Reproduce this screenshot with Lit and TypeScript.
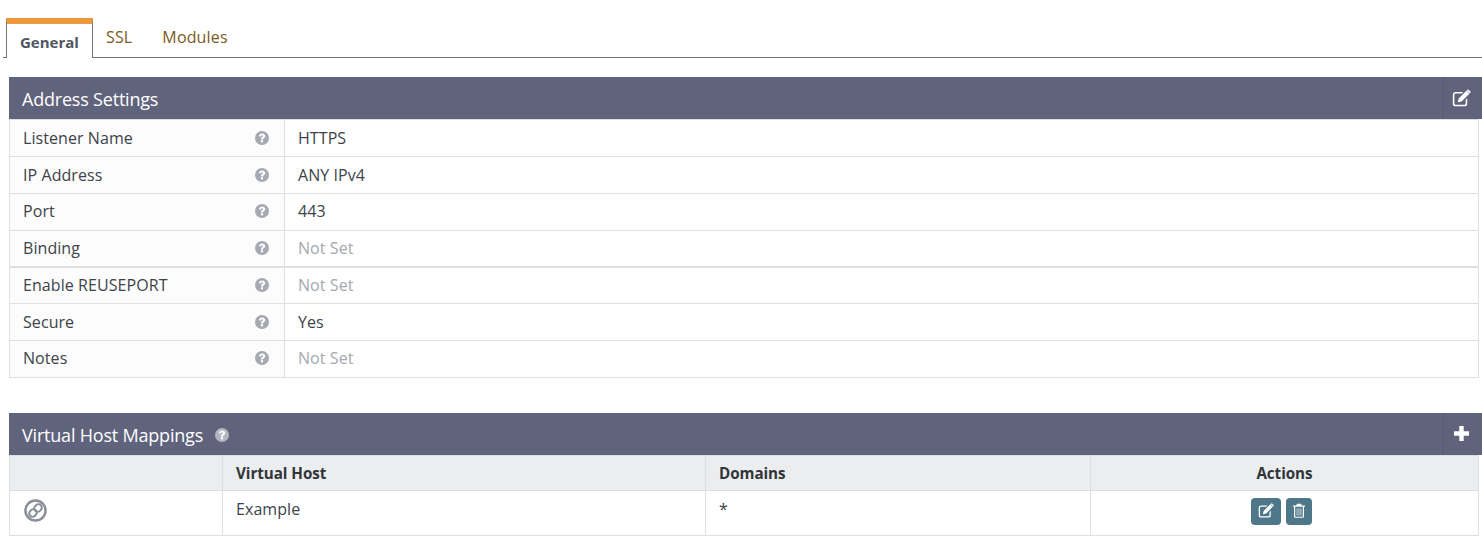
import { LitElement, html, css, svg } from "lit";
import { customElement } from "lit/decorators.js";

const help = html`<svg class="help" viewBox="0 0 14 14" aria-hidden="true"><circle cx="7" cy="7" r="7" fill="currentColor"></circle><path d="M3.900 5.300C4.100 3.500 5.400 2.400 7.100 2.400c1.800 0 3.200 1.200 3.200 2.700 0 1.100-.7 1.700-1.500 2.200-.5.300-.7.500-.7 1.100H5.900c0-1.100.3-1.700 1.100-2.200.6-.4 1-.6 1-1.100 0-.5-.4-.8-1-.8-.6 0-1 .4-1.200 1.200z" fill="#fff"></path><rect x="5.900" y="9.200" width="2.200" height="2.200" fill="#fff"></rect></svg>`;

const edit = svg`<path d="M2.800 2.500H9.500L8.200 3.800H3a1 1 0 0 0-1 1v7.400a1 1 0 0 0 1 1h7.500a1 1 0 0 0 1-1V9l1.300-1.300v4.700a2.200 2.200 0 0 1-2.200 2.200H2.900A2.200 2.200 0 0 1 .7 12.400V4.700a2.200 2.200 0 0 1 2.100-2.200z" fill="currentColor"></path><path d="M12.300 1.300l2.500 2.500-6.700 6.700-3.200.7.700-3.200zM13 .6c.3-.3.7-.3 1 0l1.500 1.500c.3.3.3.7 0 1l-.4.400-2.500-2.500z" fill="currentColor"></path>`;

const trash = svg`<path d="M5 .8h4l.8 1.700H13v1.300h-1V13.500a1.300 1.300 0 0 1-1.300 1.300H3.300A1.300 1.300 0 0 1 2 13.500V3.800H1V2.500h3.200zM3.200 3.800v9.700a.2.2 0 0 0 .2.200h7.200a.2.2 0 0 0 .2-.2V3.800z" fill="currentColor"></path><path d="M4.600 5.200h1v7.300h-1zM6.500 5.200h1v7.300h-1zM8.400 5.200h1v7.300h-1z" fill="currentColor" opacity=".7"></path>`;

const rows: [string, string, boolean][] = [
  ["Listener Name", "HTTPS", false],
  ["IP Address", "ANY IPv4", false],
  ["Port", "443", false],
  ["Binding", "Not Set", true],
  ["Enable REUSEPORT", "Not Set", true],
  ["Secure", "Yes", false],
  ["Notes", "Not Set", true],
];

@customElement("app-root")
export class AppRoot extends LitElement {
  static styles = css`
    :host {
      display: block;
      width: 1482px;
      height: 536px;
      overflow: hidden;
      background: #fff;
      font-family: "Open Sans", sans-serif;
      font-size: 16px;
      letter-spacing: 0.07px;
      color: #3d4349;
    }
    .tabs {
      display: flex;
      height: 39px;
      margin: 18px 0 0 3px;
      padding-left: 3px;
      border-bottom: 1px solid #74747f;
    }
    .tab {
      padding: 0 17px 0 13px;
      font-size: 16px;
      letter-spacing: 0.15px;
      line-height: 38px;
      color: #7a5a22;
      white-space: nowrap;
    }
    .tab.active {
      box-sizing: border-box;
      width: 87px;
      height: 40px;
      background: #fff;
      border: 1px solid #74747f;
      border-top: 6px solid #ed9a3c;
      border-bottom: 0;
      padding: 0 0 0 13px;
      font-size: 15px;
      letter-spacing: 0;
      font-weight: 700;
      line-height: 36px;
      color: #4f5560;
    }
    .panel {
      margin: 19px 0 0 9px;
    }
    .bar {
      display: flex;
      align-items: center;
      height: 42px;
      background: #5f637c;
      color: #fff;
      font-size: 18px;
      letter-spacing: -0.2px;
      padding-left: 13px;
    }
    .bar-title {
      flex: 1;
      display: flex;
      align-items: center;
      gap: 12px;
      padding-top: 2px;
    }
    .bar .help {
      color: #b4b6c2;
    }
    .bar-btn {
      width: 39px;
      height: 42px;
      padding-right: 4px;
      display: flex;
      align-items: center;
      justify-content: center;
      border-left: 1px solid #565a72;
      box-sizing: border-box;
    }
    .body {
      width: 1470px;
      box-sizing: border-box;
      border: 1px solid #dedfe1;
      border-top: 0;
    }
    .row {
      display: grid;
      grid-template-columns: 275px 1fr;
      height: 36.8px;
      box-sizing: border-box;
      border-top: 1px solid #dedfe1;
      align-items: stretch;
    }
    .row:first-child {
      height: 37px;
    }
    .row.thick {
      border-top-width: 2px;
    }
    .label {
      display: flex;
      align-items: center;
      justify-content: space-between;
      padding: 0 15px 0.8px 13px;
      background: #fcfcfc;
      border-right: 1px solid #dedfe1;
    }
    .value {
      display: flex;
      align-items: center;
      padding: 0 0 0.8px 13px;
    }
    .muted {
      color: #a4a9ae;
    }
    .help {
      width: 14px;
      height: 14px;
      color: #a6a8b2;
      flex: none;
    }
    .grid {
      display: grid;
      grid-template-columns: 213px 483px 385px 1fr;
    }
    .grid > div {
      box-sizing: border-box;
      padding-left: 13px;
      border-right: 1px solid #dedfe1;
    }
    .grid > div:last-child {
      border-right: 0;
    }
    .head {
      height: 34px;
      background: #ecedef;
      border-top: 1px solid #dedfe1;
      border-bottom: 1px solid #dedfe1;
      font-size: 15.200px;
      letter-spacing: -0.05px;
      font-weight: 700;
      line-height: 34px;
      color: #30353a;
    }
    .line {
      height: 44px;
      border-bottom: 1px solid #dedfe1;
      line-height: 36px;
    }
    .grid > .center {
      padding-left: 0;
      text-align: center;
    }
    .grid > .actions {
      display: flex;
      justify-content: center;
      gap: 5px;
      padding: 7px 6px 0 0;
    }
    .act {
      height: 27px;
      border-radius: 4px;
      background: #4e788a;
      color: #fff;
      display: flex;
      align-items: center;
      justify-content: center;
    }
    .act.e { width: 30px; }
    .act.t { width: 26px; }
    .act svg { width: 16px; height: 16px; }
    .link {
      display: block;
      width: 23px;
      height: 23px;
      margin: 8px 0 0 1px;
    }
  `;

  render() {
    return html`
      <div class="tabs">
        <div class="tab active">General</div>
        <div class="tab">SSL</div>
        <div class="tab">Modules</div>
      </div>

      <div class="panel">
        <div class="bar">
          <div class="bar-title">Address Settings</div>
          <div class="bar-btn">
            <svg width="19" height="19" viewBox="0 0 16 16">${edit}</svg>
          </div>
        </div>
        <div class="body">
          ${rows.map(
            ([k, v, muted], i) => html`
              <div class="row ${i === 4 ? "thick" : ""}">
                <div class="label">${k}${help}</div>
                <div class="value ${muted ? "muted" : ""}">${v}</div>
              </div>
            `
          )}
        </div>
      </div>

      <div class="panel" style="margin-top:35px">
        <div class="bar">
          <div class="bar-title">Virtual Host Mappings ${help}</div>
          <div class="bar-btn">
            <svg width="15" height="15" viewBox="0 0 15 15"><path d="M5.300 0h4.400v5.300H15v4.400H9.700V15H5.300V9.700H0V5.300h5.300z" fill="currentColor"></path></svg>
          </div>
        </div>
        <div class="body">
          <div class="grid head">
            <div></div>
            <div>Virtual Host</div>
            <div>Domains</div>
            <div class="center">Actions</div>
          </div>
          <div class="grid line">
            <div>
              <svg class="link" viewBox="0 0 24 24" fill="none" stroke="#8b8d99">
                <circle cx="12" cy="12" r="10.500" stroke-width="2.600"></circle>
                <g transform="rotate(-45 12 12)" stroke-width="2.100">
                  <rect x="4.200" y="8.500" width="8.300" height="7" rx="3.500"></rect>
                  <rect x="11.500" y="8.500" width="8.300" height="7" rx="3.500"></rect>
                </g>
              </svg>
            </div>
            <div>Example</div>
            <div>*</div>
            <div class="actions">
              <div class="act e"><svg viewBox="0 0 16 16">${edit}</svg></div>
              <div class="act t"><svg viewBox="0 0 14 16">${trash}</svg></div>
            </div>
          </div>
        </div>
      </div>
    `;
  }
}
